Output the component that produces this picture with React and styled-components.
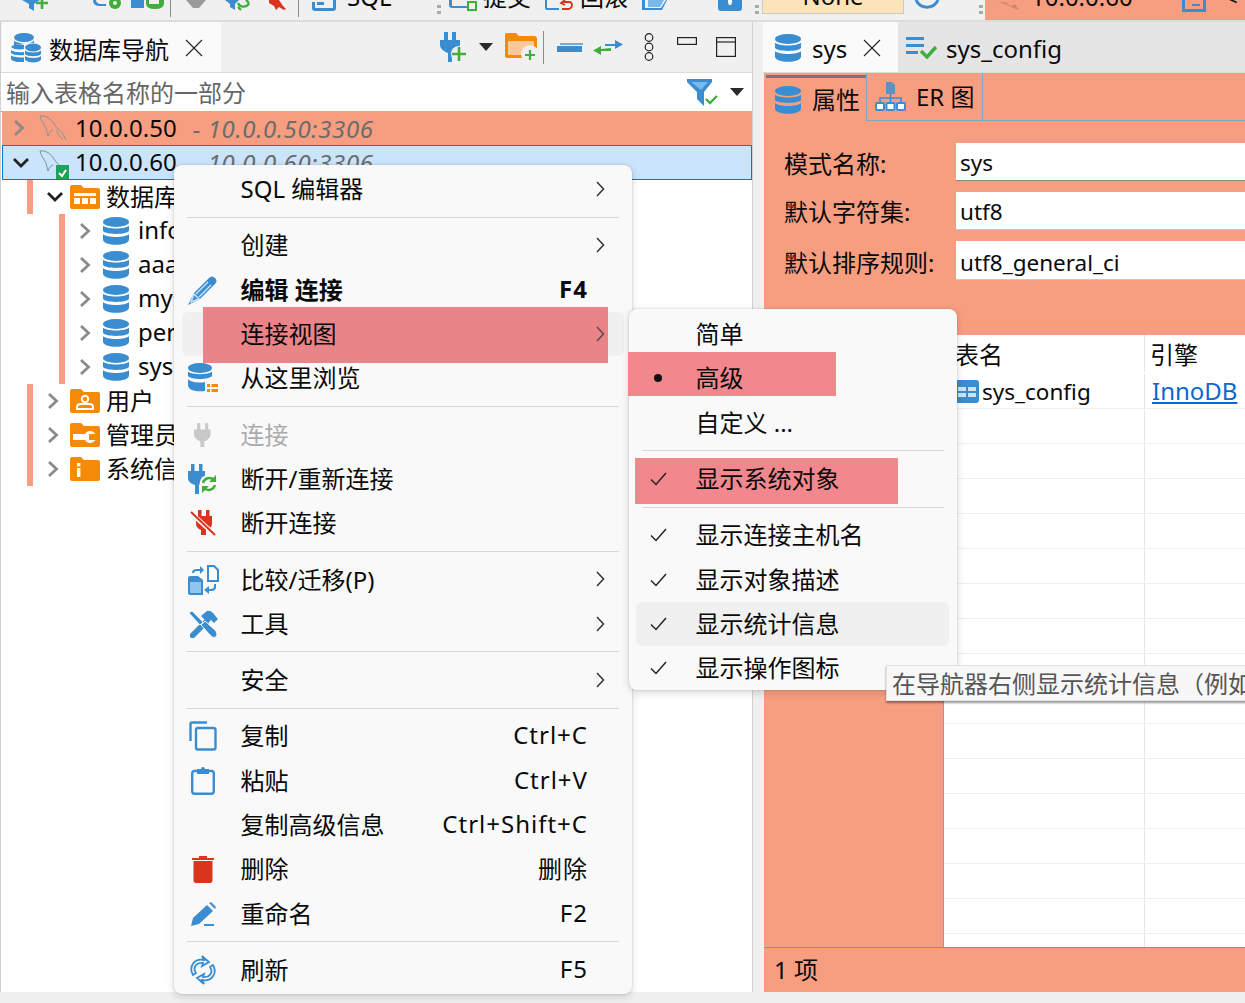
import React from "react";
import styled, { createGlobalStyle } from "styled-components";

const BLUE = "#3a8dd0";
const GREEN = "#3fae3a";
const ORANGE = "#f58a07";
const RED = "#d9341c";
const SALMON = "#f79e81";

const GlobalStyle = createGlobalStyle`
  html, body { margin: 0; padding: 0; background: #f0f0f0; }
  body { font-family: "Noto Sans", "Noto Sans CJK SC", sans-serif; font-size: 24px; color: #0a0a0a; }
`;

const Root = styled.div`
  position: relative;
  width: 1245px;
  height: 1003px;
  overflow: hidden;
  display: flex;
  flex-direction: column;
  background: #f0f0f0;
`;

/* top toolbar, only its lower edge is on screen */
const TopBar = styled.div`
  height: 20px;
  flex: none;
  display: flex;
  align-items: flex-end;
  overflow: hidden;
  border-bottom: 2px solid #dcdcdc;
`;

const TopItem = styled.div`
  flex: none;
  margin-left: ${(p) => p.$gap}px;
  margin-bottom: ${(p) => p.$up || 0}px;
  width: ${(p) => p.$w}px;
  line-height: 0;
`;

const TopText = styled.div`
  flex: none;
  margin-left: ${(p) => p.$gap}px;
  margin-bottom: 7px;
  width: ${(p) => p.$w}px;
  line-height: 32px;
  white-space: nowrap;
`;

const TopSep = styled.div`
  flex: none;
  margin-left: ${(p) => p.$gap}px;
  margin-bottom: 3px;
  width: 1px;
  height: 20px;
  background: #8c8c8c;
`;

const Grip = styled.div`
  flex: none;
  margin-left: ${(p) => p.$gap}px;
  margin-bottom: 5px;
  width: 4px;
  height: 10px;
  background: repeating-linear-gradient(#aaa 0 3px, transparent 3px 6px);
`;

const NoneBox = styled.div`
  flex: none;
  margin-left: ${(p) => p.$gap}px;
  margin-bottom: 6px;
  width: 142px;
  height: 30px;
  box-sizing: border-box;
  background: #fde3b8;
  border: 1px solid #c9c9c9;
  text-align: center;
  line-height: 21px;
`;

const ConnBox = styled.div`
  flex: 1;
  margin-left: ${(p) => p.$gap}px;
  align-self: stretch;
  background: ${SALMON};
  display: flex;
  align-items: flex-end;
  overflow: hidden;
`;

const Body = styled.div`
  flex: none;
  height: 970px;
  display: flex;
  gap: 10px;
`;

const LeftPanel = styled.section`
  width: 753px;
  flex: none;
  box-sizing: border-box;
  display: flex;
  flex-direction: column;
  background: #fff;
  border-left: 1px solid #d0d0d0;
  border-right: 1px solid #d0d0d0;
`;

const RightPanel = styled.section`
  flex: 1;
  min-width: 0;
  display: flex;
  flex-direction: column;
`;

const TabStrip = styled.div`
  height: 50px;
  flex: none;
  display: flex;
  align-items: stretch;
  background: #f0f0f0;
  border-bottom: 1px solid #dcdcdc;
`;

const Tab = styled.div`
  display: flex;
  align-items: center;
  box-sizing: border-box;
  width: ${(p) => p.$w};
  flex: ${(p) => (p.$w ? "none" : 1)};
  padding-left: ${(p) => p.$pad}px;
  padding-top: 2px;
  background: ${(p) => (p.$on ? "#fafafa" : "#e5e5e5")};
  margin-left: ${(p) => p.$off || 0}px;
  white-space: nowrap;
`;

const TabIcon = styled.span`
  display: flex;
  margin-right: ${(p) => p.$gap}px;
`;

const TabClose = styled.span`
  display: flex;
  margin-left: ${(p) => p.$gap}px;
`;

const NavTools = styled.div`
  flex: 1;
  display: flex;
  align-items: center;
  padding-left: 219px;
`;

const NavSep = styled.span`
  flex: none;
  width: 1px;
  height: 33px;
  margin-left: 6px;
  background: #8c8c8c;
`;

const ToolSlot = styled.span`
  display: flex;
  flex: none;
  margin-left: ${(p) => p.$gap}px;
  margin-bottom: ${(p) => p.$lift || 0}px;
`;

const FilterRow = styled.div`
  height: 38px;
  flex: none;
  display: flex;
`;

const FilterInput = styled.div`
  width: 670px;
  flex: none;
  box-sizing: border-box;
  padding-left: 5px;
  line-height: 40px;
  color: #666;
  border-bottom: 1px solid #8f8f8f;
  margin-bottom: -1px;
`;

const FilterTools = styled.div`
  flex: 1;
  display: flex;
  align-items: center;
  padding-left: 16px;
`;

const Tree = styled.div`
  flex: 1;
  display: flex;
  flex-direction: column;
`;

const ConnRow = styled.div`
  height: ${(p) => (p.$on ? 35 : 34)}px;
  flex: none;
  box-sizing: border-box;
  margin-left: 1px;
  display: flex;
  align-items: center;
  background: ${(p) => (p.$on ? "#c9e4fb" : SALMON)};
  border: ${(p) => (p.$on ? "1px solid #0078d7" : "none")};
  padding-left: ${(p) => (p.$on ? 10 : 11)}px;
  white-space: nowrap;
  overflow: hidden;
`;

const ConnIcon = styled.span`
  display: flex;
  position: relative;
  margin: 0 8px 0 10px;
`;

const Lifted = styled.span`
  padding-bottom: ${(p) => p.$lift}px;
`;

const ConnUrl = styled.span`
  margin-left: 16px;
  font-style: italic;
  letter-spacing: 0.65px;
  color: #6c6c6c;
`;

const TreeRow = styled.div`
  height: 34px;
  flex: none;
  display: flex;
  align-items: center;
  white-space: nowrap;
  overflow: hidden;
  padding-left: ${(p) => p.$indent}px;
`;

const Guide = styled.span`
  width: 6px;
  height: 100%;
  flex: none;
  background: ${SALMON};
  margin-right: 14px;
`;

const TreeIcon = styled.span`
  display: flex;
  margin: 0 ${(p) => p.$after}px 0 ${(p) => p.$before}px;
`;

const PropTabs = styled.div`
  height: 48px;
  flex: none;
  display: flex;
  align-items: stretch;
  padding-left: 2px;
`;

const PropTab = styled.div`
  display: flex;
  align-items: center;
  box-sizing: border-box;
  width: ${(p) => p.$w}px;
  padding-left: ${(p) => p.$pad}px;
  margin-top: ${(p) => (p.$on ? 2 : 0)}px;
  border-top: ${(p) => (p.$on ? "3px solid #777" : "none")};
  border-left: ${(p) => (p.$on ? "none" : "1px solid #7fa6c4")};
  border-right: ${(p) => (p.$on ? "none" : "1px solid #7fa6c4")};
  border-bottom: ${(p) => (p.$on ? "none" : "1px solid #7fa6c4")};
`;

const PropLine = styled.div`
  flex: 1;
  border-bottom: 1px solid #7fa6c4;
`;

const Content = styled.div`
  flex: 1;
  margin-left: 1px;
  display: flex;
  flex-direction: column;
  background: ${SALMON};
  min-height: 0;
`;

const FormArea = styled.div`
  flex: none;
  height: 204px;
  box-sizing: border-box;
  padding: 22px 0 0 20px;
  display: flex;
  flex-direction: column;
  gap: 11px;
`;

const FormRow = styled.div`
  display: flex;
  align-items: center;
`;

const FormLabel = styled.div`
  width: 172px;
  flex: none;
  white-space: nowrap;
  padding-top: ${(p) => p.$drop || 0}px;
  padding-bottom: ${(p) => p.$rise || 0}px;
`;

const FormInput = styled.div`
  flex: 1;
  box-sizing: border-box;
  height: ${(p) => p.$h}px;
  line-height: ${(p) => p.$lh}px;
  padding-left: 4px;
  font-size: 22.5px;
  background: #fff;
  border-bottom: 1px solid ${(p) => (p.$soft ? "#c0c8d0" : "#808a80")};
`;

const FormFoot = styled.div`
  height: 1px;
  background: #a9b4c2;
  flex: none;
`;

const TableArea = styled.div`
  flex: 1;
  min-height: 0;
  margin-top: 9px;
  display: flex;
  border-bottom: 1px solid #8f8f8f;
`;

const TableGutter = styled.div`
  width: 179px;
  flex: none;
  border-right: 1px solid #9a9a9a;
`;

const TableBody = styled.div`
  flex: 1;
  background: #fff;
  overflow: hidden;
  display: flex;
  flex-direction: column;
`;

const TableRow = styled.div`
  height: ${(p) => p.$h}px;
  flex: none;
  display: flex;
  box-sizing: border-box;
  padding-bottom: ${(p) => (p.$head ? 2 : 0)}px;
  border-bottom: ${(p) => (p.$head ? "none" : "1px solid #efefef")};
`;

const Cell = styled.div`
  box-sizing: border-box;
  width: ${(p) => (p.$first ? "201px" : "auto")};
  flex: ${(p) => (p.$first ? "none" : 1)};
  display: flex;
  align-items: center;
  padding-left: ${(p) => p.$pad}px;
  border-right: ${(p) => (p.$first ? "1px solid #e6e6e6" : "none")};
  white-space: nowrap;
`;

const TableName = styled.span`
  margin-left: 3px;
  font-size: 22.5px;
`;

const DbLink = styled.span`
  color: #0a68cf;
  text-decoration: underline;
  padding-bottom: 2px;
`;

const StatusBar = styled.div`
  height: 44px;
  flex: none;
  box-sizing: border-box;
  display: flex;
  align-items: center;
  padding: 0 0 3px 10px;
`;

/* context menus */
const Menu = styled.div`
  position: absolute;
  z-index: ${(p) => p.$z};
  left: ${(p) => p.$x}px;
  top: ${(p) => p.$y}px;
  width: ${(p) => p.$w}px;
  box-sizing: border-box;
  padding: ${(p) => p.$pt}px 0 ${(p) => p.$pb}px;
  background: #f9f9f9;
  border-radius: 8px;
  box-shadow: 0 0 2px rgba(0, 0, 0, 0.22), 0 3px 8px rgba(0, 0, 0, 0.14);
`;

const MenuRow = styled.div`
  position: relative;
  height: 44.3px;
  display: flex;
  align-items: center;
  white-space: nowrap;
  font-weight: ${(p) => (p.$bold ? 700 : 400)};
  color: ${(p) => (p.$off ? "#ababab" : "#0a0a0a")};
`;

const HoverBg = styled.span`
  position: absolute;
  left: ${(p) => p.$l}px;
  right: 8px;
  top: 0;
  bottom: 0;
  border-radius: 6px;
  background: #f0f0f0;
`;

const Mark = styled.span`
  position: absolute;
  left: ${(p) => p.$l}px;
  top: ${(p) => p.$t}px;
  width: ${(p) => p.$w}px;
  height: ${(p) => p.$h}px;
  background: ${(p) => p.$c};
`;

const IconSlot = styled.span`
  position: relative;
  width: 58px;
  margin-right: 8.5px;
  flex: none;
  display: flex;
  justify-content: center;
`;

const MenuLabel = styled.span`
  position: relative;
  flex: 1;
  padding-bottom: 3px;
`;

const Shortcut = styled.span`
  position: relative;
  margin-right: 44px;
  padding-bottom: 3px;
  letter-spacing: 1px;
`;

const Arrow = styled.span`
  position: absolute;
  right: 27px;
  top: 14px;
  display: flex;
  opacity: ${(p) => (p.$dim ? 0.75 : 1)};
`;

const MenuSep = styled.div`
  height: 12px;
  display: flex;
  align-items: center;
  padding: 0 13px;

  &::before {
    content: "";
    flex: 1;
    height: 1px;
    background: #d8d8d8;
  }
`;

const Tooltip = styled.div`
  position: absolute;
  z-index: 5;
  left: 886px;
  top: 665px;
  width: 380px;
  height: 36px;
  box-sizing: border-box;
  padding-left: 5px;
  line-height: 36px;
  white-space: nowrap;
  color: #555;
  background: #f7f7f7;
  border: 1px solid #e2e2e2;
  box-shadow: 0 2px 2px rgba(0, 0, 0, 0.4);
`;

const CheckBadge = styled.span`
  position: absolute;
  right: -2px;
  bottom: -5px;
  display: flex;
`;

/* icons */
const Db = ({ w = 26, h = 28, c = BLUE }) => (
  <svg width={w} height={h} viewBox="0 0 26 28" fill={c}>
    <ellipse cx="13" cy="5" rx="13" ry="5" />
    <path d="M0 8.5C3 12.5 23 12.5 26 8.5V13.5C26 18 0 18 0 13.5Z" />
    <path d="M0 17C3 21 23 21 26 17V22.5C26 29.5 0 29.5 0 22.5Z" />
  </svg>
);

const DbStack = () => (
  <svg width="30" height="30" viewBox="0 0 30 30" fill={BLUE}>
    <ellipse cx="13" cy="4.5" rx="10" ry="4.5" />
    <path d="M3 7.5C5 11 21 11 23 7.5V10C16 9 5 11 3 13Z" />
    <path d="M0 14C2 11 10 10.5 13 12V16C9 17 2 16.5 0 14Z" />
    <path d="M0 17C2 19 8 19.5 13 19V22C8 22.5 2 22 0 20Z" />
    <path d="M0 22.5C2 24 8 24.5 13 24.5V29C8 29.5 0 28.5 0 25.5Z" />
    <ellipse cx="22" cy="14.5" rx="8" ry="4" />
    <path d="M14 17.5C16 20 28 20 30 17.5V21C28 24 16 24 14 21Z" />
    <path d="M14 23C16 25.5 28 25.5 30 23V26.5C28 30.5 16 30.5 14 26.5Z" />
  </svg>
);

const Chevron = ({ open, c = "#8a8a8a" }) => (
  <svg width="16" height="18" viewBox="0 0 16 18" fill="none" stroke={c} strokeWidth="2.8">
    {open ? <path d="M1 5l7 7 7-7" /> : <path d="M2 2l7.5 7L2 16" />}
  </svg>
);

const MenuArrow = () => (
  <svg width="9" height="16" viewBox="0 0 9 16" fill="none" stroke="#333" strokeWidth="1.5">
    <path d="M1 1l6.5 7L1 15" />
  </svg>
);

const Close = () => (
  <svg width="18" height="18" viewBox="0 0 18 18" stroke="#222" strokeWidth="1.1">
    <path d="M1 1l16 16M17 1L1 17" />
  </svg>
);

const Dolphin = ({ c = "#86909a" }) => (
  <svg width="28" height="26" viewBox="0 0 28 26" fill="none" stroke={c} strokeWidth="1">
    <path d="M1 1C7 0 12 4 15 9C17 13 21 15 24 19C25 21 26 23 27 25" />
    <path d="M1 1C2 6 5 9 7 13C8 16 8 19 9 21C10 18 11 16 14 15" />
    <path d="M18 15C18 18 20 22 24 24" />
  </svg>
);

const Plug = ({ w = 24, h = 30, c = BLUE }) => (
  <svg width={w} height={h} viewBox="0 0 24 30" fill={c}>
    <rect x="4" y="0" width="4" height="9" />
    <rect x="14" y="0" width="4" height="9" />
    <path d="M0 8H21V14C21 19 16 22 13 23V30H8V23C5 22 0 19 0 14Z" />
  </svg>
);

const Plus = ({ x, y, s = 7, c = GREEN, w = 2.6 }) => (
  <path d={`M${x - s} ${y}H${x + s}M${x} ${y - s}V${y + s}`} stroke={c} strokeWidth={w} fill="none" />
);

const PlugPlus = () => (
  <svg width="27" height="30" viewBox="0 0 27 30">
    <g fill={BLUE}>
      <rect x="4" y="0" width="4" height="9" />
      <rect x="12" y="0" width="4" height="9" />
      <path d="M0 8H20V13C20 17 15 20 12 21V30H8V21C5 20 0 17 0 13Z" />
    </g>
    <circle cx="19" cy="22" r="8" fill="#f0f0f0" />
    <Plus x={19} y={22} />
  </svg>
);

const Triangle = () => (
  <svg width="14" height="8" viewBox="0 0 14 8">
    <path d="M0 0H14L7 8Z" fill="#2a2a2a" />
  </svg>
);

const FolderPlus = () => (
  <svg width="32" height="28" viewBox="0 0 32 28">
    <path d="M0 2Q0 0 2 0H11L14 3H29Q32 3 32 6V24Q32 25 30 25H2Q0 25 0 23Z" fill={ORANGE} />
    <path d="M3 8H29V22H3Z" fill="#fbc79a" />
    <circle cx="25" cy="21" r="9" fill="#f0f0f0" />
    <Plus x={25} y={22} s={5} w={2.2} />
  </svg>
);

const Collapse = () => (
  <svg width="26" height="9" viewBox="0 0 26 9">
    <path d="M0 3H25V9H0Z" fill={BLUE} />
    <path d="M3 0H26V2H3Z" fill={BLUE} opacity="0.7" />
  </svg>
);

const Swap = () => (
  <svg width="30" height="18" viewBox="0 0 30 18">
    <path d="M12 6H22V2L30 6.5L22 11V8H12Z" fill={BLUE} />
    <path d="M18 10V13H8V17L0 12.5L8 8V11Z" fill={GREEN} />
  </svg>
);

const Dots = () => (
  <svg width="12" height="28" viewBox="0 0 12 28" fill="none" stroke="#222" strokeWidth="1.2">
    <circle cx="6" cy="4.5" r="3.8" />
    <circle cx="6" cy="14" r="3.8" />
    <circle cx="6" cy="23.5" r="3.8" />
  </svg>
);

const MinBox = () => (
  <svg width="20" height="8" viewBox="0 0 20 8" fill="none" stroke="#222" strokeWidth="1.2">
    <rect x="0.6" y="0.6" width="18.8" height="6.8" />
  </svg>
);

const MaxBox = () => (
  <svg width="20" height="20" viewBox="0 0 20 20" fill="none" stroke="#222" strokeWidth="1.2">
    <rect x="0.6" y="0.6" width="18.8" height="18.8" />
    <path d="M0.6 5H19.4" />
  </svg>
);

const FilterCheck = () => (
  <svg width="31" height="27" viewBox="0 0 31 27">
    <path d="M0 0H25V3L17 13V27L10 20V13L0 3Z" fill={BLUE} />
    <path d="M4 3H21L14 11Z" fill="#79b8ea" />
    <path d="M19 20l4 4 7-7" fill="none" stroke={GREEN} strokeWidth="2.4" />
  </svg>
);

const MiniCheck = () => (
  <svg width="13" height="16" viewBox="0 0 13 16">
    <rect width="13" height="16" fill="#1fa35a" />
    <path d="M3 8l3 3 4-6" fill="none" stroke="#fff" strokeWidth="2" />
  </svg>
);

const Folder = ({ children }) => (
  <svg width="30" height="24" viewBox="0 0 30 24">
    <path d="M0 2Q0 0 2 0H11L14 3H28Q30 3 30 5V22Q30 24 28 24H2Q0 24 0 22Z" fill={ORANGE} />
    {children}
  </svg>
);

const FolderDb = () => (
  <Folder>
    <path d="M4 8H26V11H4ZM4 13H10V19H4ZM12 13H18V19H12ZM20 13H26V19H20Z" fill="#fff" />
  </Folder>
);

const FolderUser = () => (
  <Folder>
    <circle cx="15" cy="10" r="3.2" fill="none" stroke="#fff" strokeWidth="2" />
    <path d="M7 20V18Q7 15 11 15H19Q23 15 23 18V20Z" fill="none" stroke="#fff" strokeWidth="2" />
  </Folder>
);

const FolderTool = () => (
  <Folder>
    <path d="M3 11H15A6 6 0 1 1 15 17H3Z" fill="#fff" />
    <path d="M19 11H29V17H19Z" fill={ORANGE} />
  </Folder>
);

const FolderInfo = () => (
  <Folder>
    <rect x="7" y="6" width="3.4" height="3.4" fill="#fff" />
    <rect x="7" y="11" width="3.4" height="9" fill="#fff" />
  </Folder>
);

const Pencil = () => (
  <svg width="30" height="30" viewBox="0 0 30 30">
    <path d="M6 18L21 3Q24 0 27 3T27 9L12 24L0 30Z" fill={BLUE} />
    <path d="M8 19L20 7M11 22L23 10M3 27L6 19L11 24Z" stroke="#cfe5f7" strokeWidth="1.4" fill="none" />
  </svg>
);

const DbList = () => (
  <svg width="30" height="30" viewBox="0 0 30 30">
    <g fill={BLUE}>
      <ellipse cx="12" cy="5" rx="12" ry="5" />
      <path d="M0 8.5C3 12 21 12 24 8.5V13C21 17 3 17 0 13Z" />
      <path d="M0 16C3 20 14 20 17 19V28C10 29 0 28 0 22Z" />
    </g>
    <path d="M19 21H22V24H19ZM19 26H22V29H19Z" fill={ORANGE} />
    <path d="M23.5 21H30V24H23.5ZM23.5 26H30V29H23.5Z" fill={ORANGE} />
  </svg>
);

const PlugRefresh = () => (
  <svg width="30" height="30" viewBox="0 0 30 30">
    <g fill={BLUE}>
      <rect x="3" y="0" width="3.5" height="8" />
      <rect x="11" y="0" width="3.5" height="8" />
      <path d="M0 7H17V14C17 18 13 20 11 21V30H7V21C4 20 0 18 0 14Z" />
    </g>
    <circle cx="21" cy="20" r="9.5" fill="#f9f9f9" />
    <path d="M15 19A6.5 6.5 0 0 1 26 16M27 21A6.5 6.5 0 0 1 16 24" fill="none" stroke={GREEN} strokeWidth="2.4" />
    <path d="M28 11V18H21ZM14 29V22H21Z" fill={GREEN} />
  </svg>
);

const PlugOff = () => (
  <svg width="26" height="26" viewBox="0 0 26 26">
    <g fill={RED}>
      <rect x="8" y="0" width="3.5" height="7" />
      <rect x="16" y="0" width="3.5" height="7" />
      <path d="M6 6H22V14C22 17 19 19 16 20V25H11V20C8 19 6 16 6 14Z" />
    </g>
    <path d="M1 3L25 25" stroke="#f9f9f9" strokeWidth="4.5" />
    <path d="M1 2L25 25" stroke={RED} strokeWidth="2" />
  </svg>
);

const Compare = () => (
  <svg width="31" height="30" viewBox="0 0 31 30">
    <path d="M0 13Q0 11 2 11H10L15 15V30H2Q0 30 0 28Z" fill={BLUE} />
    <path d="M2 17H13V28H2Z" fill="#8fc5ee" />
    <path d="M20 1H26L30 5V16H20Z" fill="#fff" stroke={BLUE} strokeWidth="2" />
    <path d="M4 8Q4 4 9 4H12V1L16 5L12 9V6H9Q6 6 6 8Z" fill={BLUE} />
    <path d="M28 19V22Q28 26 23 26H21V29L16 25L21 21V24H23Q26 24 26 21V19Z" fill={BLUE} />
  </svg>
);

const Tools = () => (
  <svg width="30" height="28" viewBox="0 0 30 28" fill={BLUE}>
    <path d="M2 24L17 9L21 13L6 28Q4 29 2 27Z" />
    <path d="M13 6L19 1Q22 0 25 3L30 9L26 13L23 10L20 13L14 7Z" />
    <path d="M1 3L4 1L15 12L12 15Z" stroke="#f9f9f9" strokeWidth="0.8" />
    <path d="M13 15L17 11L28 21Q30 25 28 27Q25 29 22 25Z" stroke="#f9f9f9" strokeWidth="1" />
  </svg>
);

const Copy = () => (
  <svg width="28" height="30" viewBox="0 0 28 30" fill="none" stroke={BLUE} strokeWidth="2.4">
    <path d="M18 1.5H3Q1.5 1.5 1.5 3V20" />
    <rect x="7" y="7" width="19.5" height="21.5" rx="2" />
  </svg>
);

const Paste = () => (
  <svg width="24" height="28" viewBox="0 0 24 28">
    <rect x="1.2" y="4" width="21.6" height="22.8" rx="2.5" fill="none" stroke={BLUE} strokeWidth="2.4" />
    <path d="M6 2H10A2 2 0 0 1 14 2H18V7H6Z" fill={BLUE} />
  </svg>
);

const Trash = () => (
  <svg width="22" height="28" viewBox="0 0 22 28" fill={RED}>
    <path d="M0 3H7V1H15V3H22V5H0Z" />
    <path d="M1.5 6H20.5V25Q20.5 28 18 28H4Q1.5 28 1.5 25Z" />
  </svg>
);

const Rename = () => (
  <svg width="25" height="24" viewBox="0 0 25 24" fill={BLUE}>
    <path d="M0 24L2 16L16 3L22 9L8 22Z" />
    <path d="M18 1L20 0L25 5L24 7Z" />
    <rect x="13" y="22" width="10" height="2" />
  </svg>
);

const Refresh = () => (
  <svg width="28" height="30" viewBox="0 0 28 30" fill="none" stroke={BLUE} strokeWidth="1.8">
    <path d="M4 20C-1 11 6 3 15 5L13 1L20 7L13 11L14 8C8 7 3 12 7 18Z" />
    <path d="M24 10C29 19 22 27 13 25L15 29L8 23L15 19L14 22C20 23 25 18 21 12Z" />
  </svg>
);

const Check = () => (
  <svg width="17" height="14" viewBox="0 0 17 14" fill="none" stroke="#222" strokeWidth="1.5">
    <path d="M1 7.5L6 12.5L16 1" />
  </svg>
);

const Dot = styled.span`
  width: 8px;
  height: 8px;
  border-radius: 50%;
  background: #111;
`;

const TableIcon = () => (
  <svg width="24" height="23" viewBox="0 0 24 23">
    <rect width="24" height="23" rx="3" fill={BLUE} />
    <path d="M3 7H11V11H3ZM13 7H21V11H13ZM3 13H11V17H3ZM13 13H21V17H13Z" fill="#cfe5f7" />
  </svg>
);

const ListCheck = () => (
  <svg width="31" height="22" viewBox="0 0 31 22">
    <path d="M0 0H18V3H0ZM0 7H18V10H0ZM0 14H12V17H0Z" fill={BLUE} />
    <path d="M15 14l6 6 9-10" fill="none" stroke={GREEN} strokeWidth="3.4" />
  </svg>
);

const ErIcon = () => (
  <svg width="31" height="29" viewBox="0 0 31 29" fill="none">
    <path d="M11 0H17L20 3V12H11Z" fill={BLUE} opacity="0.8" />
    <path d="M15.5 12V16M5 21V16H26V21M15.5 16V21" stroke={BLUE} strokeWidth="1.6" />
    <g fill="#fff" stroke={BLUE} strokeWidth="2">
      <rect x="1" y="21" width="8" height="7" rx="1" />
      <rect x="11.5" y="21" width="8" height="7" rx="1" />
      <rect x="22" y="21" width="8" height="7" rx="1" />
    </g>
  </svg>
);

const ToolGlyph = ({ w, h = 12, children }) => (
  <svg width={w} height={h} viewBox={`0 0 ${w} ${h}`}>
    {children}
  </svg>
);

const mainItems = [
  { label: "SQL 编辑器", more: true },
  "sep",
  { label: "创建", more: true },
  { label: "编辑 连接", icon: <Pencil />, short: "F4", bold: true },
  {
    label: "连接视图",
    more: true,
    hover: 8,
    mark: { l: 29, t: -5, w: 405, h: 56, c: "#e98489" },
  },
  { label: "从这里浏览", icon: <DbList /> },
  "sep",
  { label: "连接", icon: <Plug c="#c9c9c9" w={19} h={26} />, off: true },
  { label: "断开/重新连接", icon: <PlugRefresh /> },
  { label: "断开连接", icon: <PlugOff /> },
  "sep",
  { label: "比较/迁移(P)", icon: <Compare />, more: true },
  { label: "工具", icon: <Tools />, more: true },
  "sep",
  { label: "安全", more: true },
  "sep",
  { label: "复制", icon: <Copy />, short: "Ctrl+C" },
  { label: "粘贴", icon: <Paste />, short: "Ctrl+V" },
  { label: "复制高级信息", short: "Ctrl+Shift+C" },
  { label: "删除", icon: <Trash />, short: "删除" },
  { label: "重命名", icon: <Rename />, short: "F2" },
  "sep",
  { label: "刷新", icon: <Refresh />, short: "F5" },
];

const subItems = [
  { label: "简单" },
  { label: "高级", icon: <Dot />, mark: { l: -1, t: -4, w: 208, h: 44, c: "#f2888e" } },
  { label: "自定义 ..." },
  "sep",
  { label: "显示系统对象", icon: <Check />, mark: { l: 6, t: 1, w: 263, h: 46, c: "#f2888e" } },
  "sep",
  { label: "显示连接主机名", icon: <Check /> },
  { label: "显示对象描述", icon: <Check /> },
  { label: "显示统计信息", icon: <Check />, hover: 7 },
  { label: "显示操作图标", icon: <Check /> },
];

const MenuList = ({ items }) =>
  items.map((item, i) =>
    item === "sep" ? (
      <MenuSep key={i} />
    ) : (
      <MenuRow key={i} $bold={item.bold} $off={item.off}>
        {item.hover && <HoverBg $l={item.hover} />}
        {item.mark && (
          <Mark $l={item.mark.l} $t={item.mark.t} $w={item.mark.w} $h={item.mark.h} $c={item.mark.c} />
        )}
        <IconSlot>{item.icon}</IconSlot>
        <MenuLabel>{item.label}</MenuLabel>
        {item.short && <Shortcut>{item.short}</Shortcut>}
        {item.more && (
          <Arrow $dim={!!item.mark}>
            <MenuArrow />
          </Arrow>
        )}
      </MenuRow>
    )
  );

const schemas = ["information_schema", "aaa", "mysql", "performance_schema", "sys"];
const blankRows = Array.from({ length: 16 });

const App = () => {
  return (
    <Root>
      <GlobalStyle />
      <TopBar>
        <TopItem $gap={20} $w={28} $up={8}>
          <ToolGlyph w={28}>
            <path d="M2 0H20L14 4V11L9 8V4Z" fill={BLUE} />
            <Plus x={22} y={3} s={6} />
          </ToolGlyph>
        </TopItem>
        <TopItem $gap={42} $w={38} $up={8}>
          <ToolGlyph w={38}>
            <path d="M3 0H6Q6 3 10 4H16V6H10Q3 6 3 0Z" fill={BLUE} />
            <circle cx="25" cy="3" r="6" fill={GREEN} />
            <circle cx="25" cy="3" r="2" fill="#f0f0f0" />
          </ToolGlyph>
        </TopItem>
        <TopItem $gap={3} $w={33} $up={8}>
          <ToolGlyph w={33}>
            <path d="M0 0H13V8H0Z" fill={BLUE} />
            <path d="M15 0H18V4H28V0H33V3Q33 9 24 9Q15 9 15 3Z" fill={GREEN} />
          </ToolGlyph>
        </TopItem>
        <TopSep $gap={6} />
        <TopItem $gap={15} $w={20} $up={10}>
          <ToolGlyph w={20} h={10}>
            <path d="M0 0H20L13 8H7Z" fill="#9a9a9a" />
          </ToolGlyph>
        </TopItem>
        <TopItem $gap={17} $w={28} $up={8}>
          <ToolGlyph w={28}>
            <path d="M2 0H16L12 4V10L7 7V4Z" fill={BLUE} />
            <path d="M15 3A6 6 0 0 0 26 3M18 10L15 7M23 0L26 3" fill="none" stroke={GREEN} strokeWidth="2.4" />
          </ToolGlyph>
        </TopItem>
        <TopItem $gap={18} $w={17} $up={8}>
          <ToolGlyph w={17}>
            <path d="M0 0H10L14 6L17 9L15 10L10 7L7 10L5 6L0 3Z" fill={RED} />
          </ToolGlyph>
        </TopItem>
        <TopSep $gap={12} />
        <TopItem $gap={13} $w={24} $up={8}>
          <ToolGlyph w={24}>
            <path d="M0 2H3V8H21V0H24V8Q24 11 21 11H3Q0 11 0 8Z" fill={BLUE} />
            <path d="M5 2H12V5H5Z" fill={BLUE} />
          </ToolGlyph>
        </TopItem>
        <TopText $gap={11} $w={80}>SQL</TopText>
        <Grip $gap={10} />
        <TopItem $gap={8} $w={28} $up={8}>
          <ToolGlyph w={28}>
            <path d="M0 0H3V6H18V8H3Q0 8 0 5Z" fill={BLUE} />
            <path d="M18 1H28V11H18ZM20 3V9H26V3Z" fill={GREEN} fillRule="evenodd" />
          </ToolGlyph>
        </TopItem>
        <TopText $gap={6} $w={62}>提交</TopText>
        <TopItem $gap={0} $w={28} $up={8}>
          <ToolGlyph w={28}>
            <path d="M0 0H2V8H14V10H2Q0 10 0 8Z" fill={BLUE} />
            <path d="M18 2H24Q27 2 27 5T24 9H17M20 0L16 3L20 5" fill="none" stroke={RED} strokeWidth="1.8" />
          </ToolGlyph>
        </TopItem>
        <TopText $gap={7} $w={62}>回滚</TopText>
        <TopItem $gap={0} $w={25} $up={8}>
          <ToolGlyph w={25}>
            <path d="M0 0H3V8H19L24 0H25L20 10H0Z" fill={BLUE} />
            <path d="M6 0H22L18 7H6Z" fill="#79b8ea" />
          </ToolGlyph>
        </TopItem>
        <TopItem $gap={51} $w={24} $up={8}>
          <ToolGlyph w={24}>
            <path d="M0 0H24V8Q24 11 21 11H3Q0 11 0 8Z" fill={BLUE} />
            <path d="M10 0H14V3L13 5H11L10 3Z" fill="#fff" />
          </ToolGlyph>
        </TopItem>
        <Grip $gap={13} />
        <NoneBox $gap={3}>None</NoneBox>
        <TopItem $gap={10} $w={26} $up={10}>
          <ToolGlyph w={26} h={10}>
            <path d="M2 0A12 12 0 0 0 24 0" fill="none" stroke={BLUE} strokeWidth="3" />
          </ToolGlyph>
        </TopItem>
        <Grip $gap={39} />
        <ConnBox $gap={2}>
          <TopItem $gap={14} $w={22} $up={8}>
            <ToolGlyph w={22} h={10}>
              <path d="M0 0H6L12 4L16 2L20 8L14 6L8 3Z" fill="#c98a70" />
            </ToolGlyph>
          </TopItem>
          <TopText $gap={10} $w={119}>10.0.0.60</TopText>
          <TopItem $gap={32} $w={24} $up={8}>
            <ToolGlyph w={24}>
              <path d="M0 0H3V9H21V0H24V12H0ZM10 4H18V6H10Z" fill={BLUE} />
            </ToolGlyph>
          </TopItem>
          <TopText $gap={18} $w={20}>&lt;</TopText>
        </ConnBox>
      </TopBar>

      <Body>
        <LeftPanel>
          <TabStrip>
            <Tab $w="219px" $pad={9} $on $off={1}>
              <TabIcon $gap={8}>
                <DbStack />
              </TabIcon>
              数据库导航
              <TabClose $gap={16}>
                <Close />
              </TabClose>
            </Tab>
            <NavTools>
              <ToolSlot $gap={0}>
                <PlugPlus />
              </ToolSlot>
              <ToolSlot $gap={12}>
                <Triangle />
              </ToolSlot>
              <ToolSlot $gap={12}>
                <FolderPlus />
              </ToolSlot>
              <NavSep />
              <ToolSlot $gap={13}>
                <Collapse />
              </ToolSlot>
              <ToolSlot $gap={10}>
                <Swap />
              </ToolSlot>
              <ToolSlot $gap={20}>
                <Dots />
              </ToolSlot>
              <ToolSlot $gap={22} $lift={12}>
                <MinBox />
              </ToolSlot>
              <ToolSlot $gap={19}>
                <MaxBox />
              </ToolSlot>
            </NavTools>
          </TabStrip>

          <FilterRow>
            <FilterInput>输入表格名称的一部分</FilterInput>
            <FilterTools>
              <FilterCheck />
              <ToolSlot $gap={12}>
                <Triangle />
              </ToolSlot>
            </FilterTools>
          </FilterRow>

          <Tree>
            <ConnRow>
              <Chevron />
              <ConnIcon>
                <Dolphin />
              </ConnIcon>
              <Lifted $lift={2}>10.0.0.50</Lifted>
              <ConnUrl>- 10.0.0.50:3306</ConnUrl>
            </ConnRow>
            <ConnRow $on>
              <Chevron open c="#222" />
              <ConnIcon>
                <Dolphin />
                <CheckBadge>
                  <MiniCheck />
                </CheckBadge>
              </ConnIcon>
              <Lifted $lift={2}>10.0.0.60</Lifted>
              <ConnUrl>- 10.0.0.60:3306</ConnUrl>
            </ConnRow>
            <TreeRow $indent={26}>
              <Guide />
              <Chevron open c="#222" />
              <TreeIcon $before={7} $after={6}>
                <FolderDb />
              </TreeIcon>
              <Lifted $lift={3}>数据库</Lifted>
            </TreeRow>
            {schemas.map((name) => (
              <TreeRow key={name} $indent={58}>
                <Guide />
                <Chevron />
                <TreeIcon $before={8} $after={9}>
                  <Db />
                </TreeIcon>
                <Lifted $lift={3}>{name}</Lifted>
              </TreeRow>
            ))}
            <TreeRow $indent={26}>
              <Guide />
              <Chevron />
              <TreeIcon $before={7} $after={6}>
                <FolderUser />
              </TreeIcon>
              <Lifted $lift={3}>用户</Lifted>
            </TreeRow>
            <TreeRow $indent={26}>
              <Guide />
              <Chevron />
              <TreeIcon $before={7} $after={6}>
                <FolderTool />
              </TreeIcon>
              <Lifted $lift={3}>管理员</Lifted>
            </TreeRow>
            <TreeRow $indent={26}>
              <Guide />
              <Chevron />
              <TreeIcon $before={7} $after={6}>
                <FolderInfo />
              </TreeIcon>
              <Lifted $lift={3}>系统信息</Lifted>
            </TreeRow>
          </Tree>
        </LeftPanel>

        <RightPanel>
          <TabStrip>
            <Tab $w="135px" $pad={12} $on>
              <TabIcon $gap={11}>
                <Db />
              </TabIcon>
              sys
              <TabClose $gap={16}>
                <Close />
              </TabClose>
            </Tab>
            <Tab $pad={8}>
              <TabIcon $gap={9}>
                <ListCheck />
              </TabIcon>
              sys_config
            </Tab>
          </TabStrip>
          <Content>
            <PropTabs>
              <PropTab $w={100} $pad={9} $on>
                <TabIcon $gap={11}>
                  <Db />
                </TabIcon>
                <Lifted $lift={2}>属性</Lifted>
              </PropTab>
              <PropTab $w={117} $pad={8}>
                <TabIcon $gap={10}>
                  <ErIcon />
                </TabIcon>
                <Lifted $lift={2}>ER 图</Lifted>
              </PropTab>
              <PropLine />
            </PropTabs>
            <FormArea>
              <FormRow>
                <FormLabel>模式名称:</FormLabel>
                <FormInput $h={38} $lh={40}>sys</FormInput>
              </FormRow>
              <FormRow>
                <FormLabel $rise={2}>默认字符集:</FormLabel>
                <FormInput $h={38} $lh={39} $soft>utf8</FormInput>
              </FormRow>
              <FormRow>
                <FormLabel $drop={2}>默认排序规则:</FormLabel>
                <FormInput $h={39} $lh={43} $soft>utf8_general_ci</FormInput>
              </FormRow>
            </FormArea>
            <FormFoot />
            <TableArea>
              <TableGutter />
              <TableBody>
                <TableRow $h={39} $head>
                  <Cell $first $pad={11}>表名</Cell>
                  <Cell $pad={5}>引擎</Cell>
                </TableRow>
                <TableRow $h={35}>
                  <Cell $first $pad={11}>
                    <TableIcon />
                    <TableName>sys_config</TableName>
                  </Cell>
                  <Cell $pad={7}>
                    <DbLink>InnoDB</DbLink>
                  </Cell>
                </TableRow>
                {blankRows.map((_, i) => (
                  <TableRow key={i} $h={35}>
                    <Cell $first />
                    <Cell />
                  </TableRow>
                ))}
              </TableBody>
            </TableArea>
            <StatusBar>1 项</StatusBar>
          </Content>
        </RightPanel>
      </Body>

      <Menu $x={174} $y={165} $w={458} $z={2} $pt={2} $pb={2}>
        <MenuList items={mainItems} />
      </Menu>
      <Menu $x={629} $y={309} $w={328} $z={3} $pt={3} $pb={0}>
        <MenuList items={subItems} />
      </Menu>
      <Tooltip>在导航器右侧显示统计信息（例如</Tooltip>
    </Root>
  );
};

export default App;
